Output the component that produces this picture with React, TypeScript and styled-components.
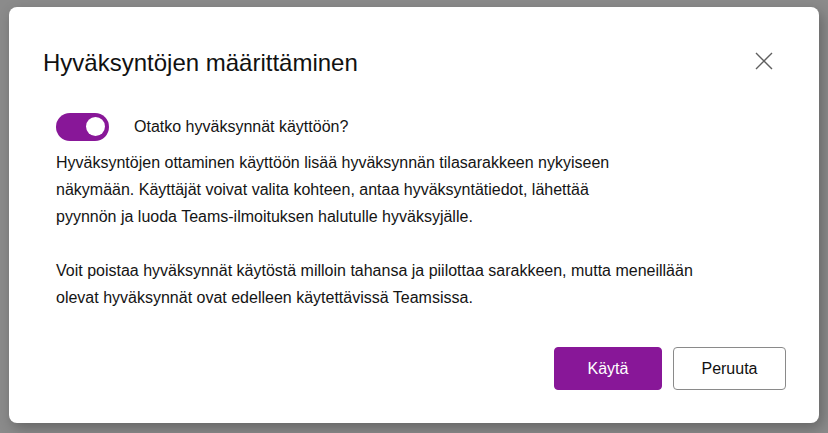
import React, { useState } from 'react';
import styled, { createGlobalStyle } from 'styled-components';

const GlobalStyle = createGlobalStyle`
  html, body {
    margin: 0;
    padding: 0;
    background: #8b8b8b;
  }
  body {
    font-family: "Liberation Sans", Arial, sans-serif;
    -webkit-font-smoothing: antialiased;
  }
`;

const Backdrop = styled.div`
  width: 828px;
  height: 433px;
  box-sizing: border-box;
  padding: 7px 9px;
  background: #8b8b8b;
  overflow: hidden;
`;

const Dialog = styled.div`
  width: 810px;
  height: 416px;
  box-sizing: border-box;
  background: #ffffff;
  border-radius: 8px;
  box-shadow: 3px 5px 14px rgba(0, 0, 0, 0.28);
  display: flex;
  flex-direction: column;
  padding: 42px 33px 33px 0;
`;

const Header = styled.div`
  display: flex;
  align-items: center;
  justify-content: space-between;
  padding: 0 13px 0 34px;
`;

const Title = styled.h2`
  margin: 0;
  font-size: 24px;
  line-height: 28px;
  font-weight: 400;
  color: #111111;
`;

const CloseButton = styled.button`
  width: 18px;
  height: 18px;
  padding: 0;
  margin-top: -4px;
  border: none;
  background: transparent;
  cursor: pointer;
  display: flex;
  align-items: center;
  justify-content: center;
`;

const Content = styled.div`
  padding: 36px 0 0 47px;
  flex: 1;
`;

const ToggleRow = styled.div`
  display: flex;
  align-items: center;
  gap: 25px;
  height: 28px;
`;

const Track = styled.button<{ $on: boolean }>`
  position: relative;
  width: 53px;
  height: 28px;
  padding: 0;
  border: none;
  border-radius: 14px;
  background: ${(p) => (p.$on ? '#881798' : '#8a8a8a')};
  cursor: pointer;
`;

const Knob = styled.span<{ $on: boolean }>`
  position: absolute;
  top: 4px;
  left: ${(p) => (p.$on ? '30px' : '4px')};
  width: 19px;
  height: 19px;
  border-radius: 50%;
  background: #ffffff;
`;

const ToggleLabel = styled.span`
  font-size: 16px;
  color: #141414;
`;

const Paragraph = styled.p`
  margin: 0;
  font-size: 16px;
  line-height: 27px;
  color: #141414;

  & + & {
    margin-top: 27px;
  }
`;

const Text = styled.div`
  margin-top: 8px;
`;

const Footer = styled.div`
  display: flex;
  justify-content: flex-end;
  gap: 11px;
`;

const Button = styled.button<{ $primary?: boolean }>`
  height: 43px;
  box-sizing: border-box;
  border-radius: 4px;
  font-family: "Liberation Sans", Arial, sans-serif;
  font-size: 16px;
  cursor: pointer;
  border: 1px solid ${(p) => (p.$primary ? '#881798' : '#8a8a8a')};
  background: ${(p) => (p.$primary ? '#881798' : '#ffffff')};
  color: ${(p) => (p.$primary ? '#ffffff' : '#111111')};
`;

const App: React.FC = () => {
  const [enabled, setEnabled] = useState(true);

  return (
    <>
      <GlobalStyle />
      <Backdrop>
        <Dialog role="dialog">
          <Header>
            <Title>Hyväksyntöjen määrittäminen</Title>
            <CloseButton aria-label="Sulje">
              <svg width="18" height="18" viewBox="0 0 18 18">
                <path d="M1 1 L17 17 M17 1 L1 17" stroke="#5f5f5f" strokeWidth="1.4" fill="none" />
              </svg>
            </CloseButton>
          </Header>
          <Content>
            <ToggleRow>
              <Track $on={enabled} onClick={() => setEnabled(!enabled)} aria-pressed={enabled}>
                <Knob $on={enabled} />
              </Track>
              <ToggleLabel>Otatko hyväksynnät käyttöön?</ToggleLabel>
            </ToggleRow>
            <Text>
              <Paragraph>
                Hyväksyntöjen ottaminen käyttöön lisää hyväksynnän tilasarakkeen nykyiseen
                <br />
                näkymään. Käyttäjät voivat valita kohteen, antaa hyväksyntätiedot, lähettää
                <br />
                pyynnön ja luoda Teams-ilmoituksen halutulle hyväksyjälle.
              </Paragraph>
              <Paragraph>
                Voit poistaa hyväksynnät käytöstä milloin tahansa ja piilottaa sarakkeen, mutta meneillään
                <br />
                olevat hyväksynnät ovat edelleen käytettävissä Teamsissa.
              </Paragraph>
            </Text>
          </Content>
          <Footer>
            <Button $primary style={{ width: 108 }}>Käytä</Button>
            <Button style={{ width: 113 }}>Peruuta</Button>
          </Footer>
        </Dialog>
      </Backdrop>
    </>
  );
};

export default App;
